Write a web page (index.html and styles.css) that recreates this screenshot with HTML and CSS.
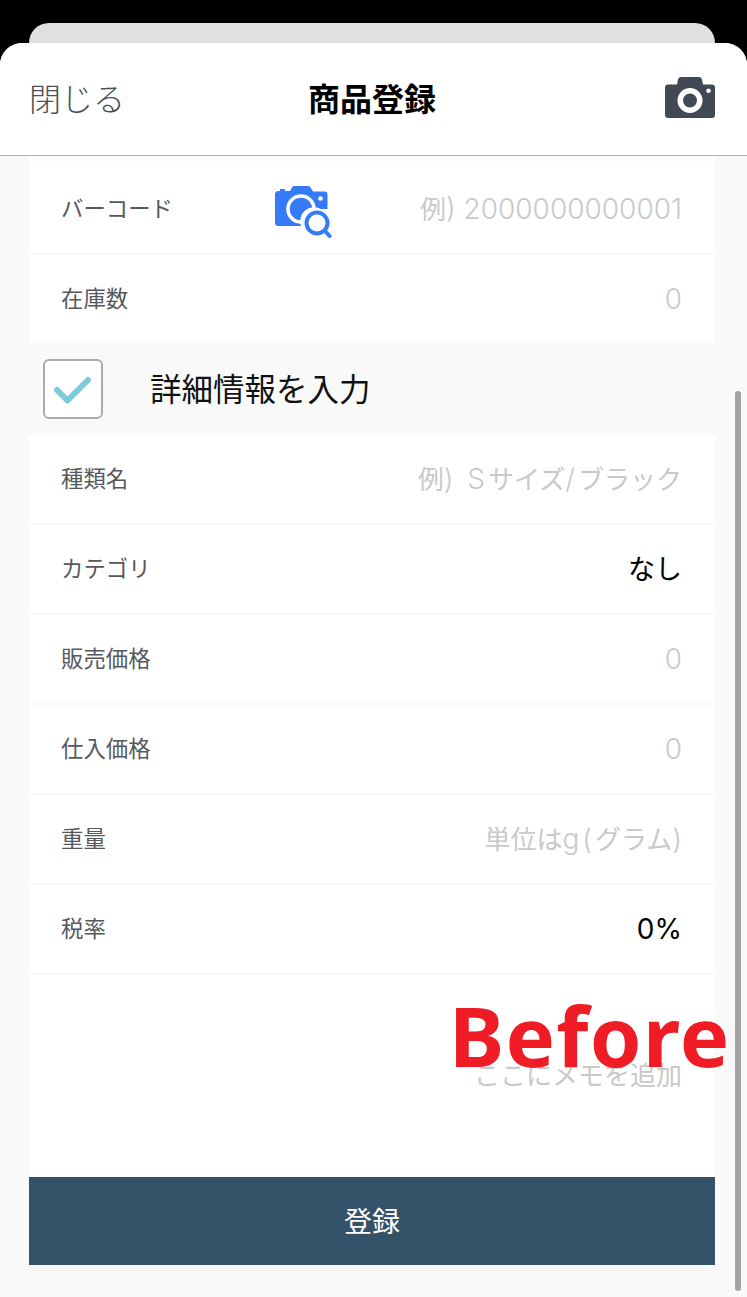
FILE: index.html
```html
<!DOCTYPE html>
<html lang="ja">
<head>
<meta charset="utf-8">
<title>商品登録</title>
<link rel="stylesheet" href="styles.css">
</head>
<body>
<div class="screen">
  <div class="backdrop"><div class="back-card"></div></div>
  <div class="sheet">
    <header class="header">
      <span class="close">閉じる</span>
      <h1 class="title">商品登録</h1>
      <svg class="cam" viewBox="0 0 50 41" width="50" height="41"><path fill="#414a54" fill-rule="evenodd" d="M13 2.500C13.400 1 14.500 0 16 0H34C35.500 0 36.600 1 37 2.500L38 7.500H47C48.800 7.500 50 8.700 50 10.500V38C50 39.800 48.800 41 47 41H3C1.200 41 0 39.800 0 38V10.500C0 8.700 1.200 7.500 3 7.500H12ZM25 11A12.500 12.500 0 1 0 25 36A12.500 12.500 0 1 0 25 11ZM25 16.500A7 7 0 1 1 25 30.500A7 7 0 1 1 25 16.500ZM43.500 11.500A2.300 2.300 0 1 0 43.500 16.100A2.300 2.300 0 1 0 43.500 11.500Z"/></svg>
    </header>
    <main class="content">
      <div class="sliver"></div>
      <div class="row">
        <span class="label">バーコード</span>
        <svg class="scan" viewBox="0 0 57 53" width="57" height="53">
          <path fill="#357af6" d="M5 3H10V5H5ZM15 5L17 1.500C17.500 .5 18.500 0 19.500 0H33C34 0 35 .5 35.500 1.500L38 5.500H50C51.500 5.500 52.500 6.500 52.500 8V23H46A14 14 0 0 0 26 40H3C1.500 40 0 39 0 37V8C0 6.500 1.500 5 3 5Z"/>
          <circle cx="26" cy="23" r="13" fill="none" stroke="#fff" stroke-width="3.500"/>
          <circle cx="45.500" cy="12.500" r="2.300" fill="#fff"/>
          <circle cx="42" cy="37" r="10.500" fill="#fff" stroke="#357af6" stroke-width="4"/>
          <path d="M50 45L54.500 50" stroke="#357af6" stroke-width="4" stroke-linecap="round"/>
        </svg>
        <span class="hint">例<span class="num">) 2000000000001</span></span>
      </div>
      <div class="row"><span class="label">在庫数</span><span class="hint"><span class="num">0</span></span></div>
      <div class="check-band">
        <span class="checkbox">
          <svg viewBox="0 0 40 32" width="40" height="32"><path d="M4 17L14.500 27.500L35 7" fill="none" stroke="#7dcbd8" stroke-width="6" stroke-linecap="round" stroke-linejoin="round"/></svg>
        </span>
        <span class="check-label">詳細情報を入力</span>
      </div>
      <div class="row"><span class="label">種類名</span><span class="hint">例<span class="num wide">) S</span>サイズ<span class="num wide">/</span>ブラック</span></div>
      <div class="row"><span class="label">カテゴリ</span><span class="value">なし</span></div>
      <div class="row"><span class="label">販売価格</span><span class="hint"><span class="num">0</span></span></div>
      <div class="row"><span class="label">仕入価格</span><span class="hint"><span class="num">0</span></span></div>
      <div class="row"><span class="label">重量</span><span class="hint">単位は<span class="num wide">g(</span>グラム<span class="num">)</span></span></div>
      <div class="row"><span class="label">税率</span><span class="value"><span class="num">0%</span></span></div>
      <div class="memo"><span class="hint">ここにメモを追加</span></div>
      <button class="submit" type="button">登録</button>
    </main>
  </div>
  <div class="scrollbar"></div>
  <div class="stamp">Before</div>
</div>
</body>
</html>
```

FILE: styles.css
```css
* { box-sizing: border-box; }
html, body { margin: 0; padding: 0; }
body {
  width: 747px;
  height: 1297px;
  overflow: hidden;
  font-family: "Noto Sans CJK JP", "Noto Sans", sans-serif;
  background: #000;
}
.screen { position: relative; width: 747px; height: 1297px; overflow: hidden; }
.backdrop { height: 43px; padding: 23px 32px 0 29px; background: #000; }
.back-card { height: 20px; background: #e0e0e0; border-radius: 22px 22px 0 0; }
.sheet {
  height: 1254px;
  background: #f9f9f9;
  border-radius: 22px 22px 0 0;
  overflow: hidden;
}
.header {
  height: 113px;
  background: #fff;
  border-bottom: 1px solid #b3b3b3;
  padding: 0 32px 4px 29px;
  display: grid;
  grid-template-columns: 1fr auto 1fr;
  align-items: center;
}
.close { font-size: 32px; line-height: 44px; color: #4a4f55; font-weight: 300; }
.title { margin: 0; font-size: 32px; line-height: 44px; font-weight: 700; color: #000; }
.cam { justify-self: end; }
.content { padding: 0 32px 0 29px; display: flex; flex-direction: column; }
.sliver { height: 8px; background: #fff; margin-bottom: 1px; }
.row {
  height: 88px;
  background: #fff;
  margin-bottom: 2px;
  padding: 0 33px 4px 32px;
  display: flex;
  align-items: center;
  justify-content: space-between;
  position: relative;
}
.label { font-size: 22.400px; color: #55595e; font-weight: 400; }
.hint { font-size: 26px; color: #c9c9c9; font-weight: 400; }
.value { font-size: 27px; color: #000; font-weight: 400; }
.num { font-family: Inter, "Liberation Sans", sans-serif; font-size: 28px; font-weight: 300; }
.num.wide { letter-spacing: 3px; }
.value .num { font-weight: 400; }
.scan { position: absolute; left: 246px; top: 21px; }
.check-band {
  height: 92px;
  margin-top: -2px;
  display: flex;
  align-items: center;
  padding-left: 14px;
  gap: 47px;
}
.checkbox {
  width: 60px;
  height: 60px;
  background: #fff;
  border: 2px solid #ababab;
  border-radius: 6px;
  display: flex;
  align-items: center;
  justify-content: center;
}
.check-label { font-size: 31.500px; line-height: 44px; margin-bottom: 4px; color: #111; }
.memo {
  height: 202px;
  background: #fff;
  padding: 0 33px 0 0;
  display: flex;
  justify-content: flex-end;
  align-items: flex-start;
}
.memo .hint { line-height: 40px; margin-top: 79px; }
.submit {
  height: 88px;
  border: 0;
  padding: 0 0 2px;
  background: #345267;
  color: #fff;
  font: 400 28px "Noto Sans CJK JP", sans-serif;
}
.scrollbar {
  position: absolute;
  left: 735px;
  top: 391px;
  width: 6px;
  height: 900px;
  border-radius: 3px;
  background: #a3a3a3;
}
.stamp {
  position: absolute;
  left: 449px;
  top: 980px;
  font: 700 83px/110px "Noto Sans", sans-serif;
  letter-spacing: 1.300px;
  color: #ef1c25;
}
```
